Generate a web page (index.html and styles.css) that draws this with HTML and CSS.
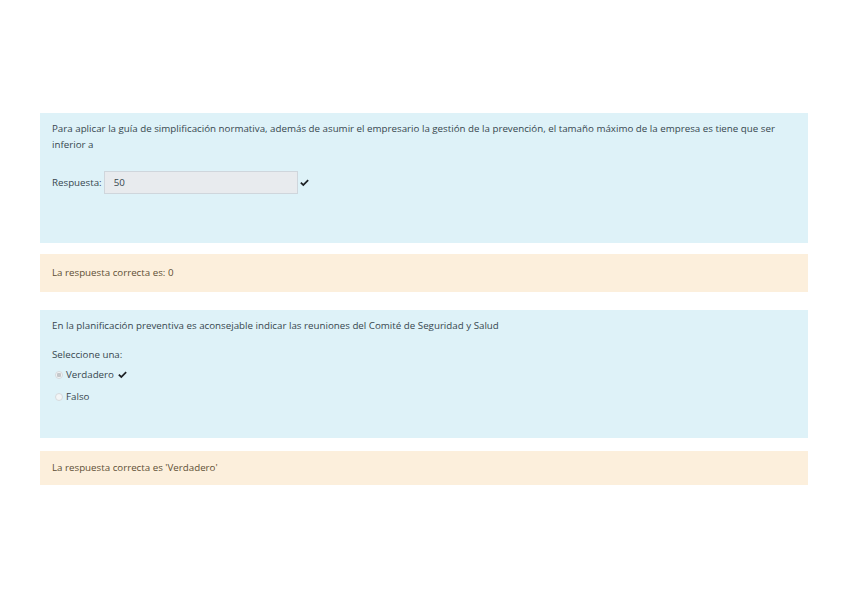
FILE: index.html
```html
<!DOCTYPE html>
<html lang="es">
<head>
    <meta charset="UTF-8">
    <meta name="viewport" content="width=device-width, initial-scale=1.0">
    <title>Revisión del intento</title>
    <link rel="stylesheet" href="styles.css">
</head>
<body>
    <div id="questions">

        <div class="que shortanswer">
            <div class="formulation">
                <div class="qtext">Para aplicar la guía de simplificación normativa, además de asumir el empresario la gestión de la prevención, el tamaño máximo de la empresa es tiene que ser inferior a</div>
                <div class="ablock">
                    <label for="q1answer">Respuesta:</label>
                    <input type="text" id="q1answer" value="50" readonly>
                    <svg class="check" viewBox="0 0 12 10" width="9" height="8"><path d="M0.3 5.2 L1.9 3.6 L4.4 6.1 L10.1 0.4 L11.7 2 L4.4 9.3 Z"/></svg>
                </div>
            </div>
            <div class="outcome">La respuesta correcta es: 0</div>
        </div>

        <div class="que truefalse">
            <div class="formulation">
                <div class="qtext">En la planificación preventiva es aconsejable indicar las reuniones del Comité de Seguridad y Salud</div>
                <div class="ablock">
                    <div class="prompt">Seleccione una:</div>
                    <div class="answer">
                        <div class="option">
                            <input type="radio" name="q2" id="q2true" checked disabled>
                            <label for="q2true">Verdadero</label>
                            <svg class="check" viewBox="0 0 12 10" width="9" height="8"><path d="M0.3 5.2 L1.9 3.6 L4.4 6.1 L10.1 0.4 L11.7 2 L4.4 9.3 Z"/></svg>
                        </div>
                        <div class="option">
                            <input type="radio" name="q2" id="q2false" disabled>
                            <label for="q2false">Falso</label>
                        </div>
                    </div>
                </div>
            </div>
            <div class="outcome small">La respuesta correcta es 'Verdadero'</div>
        </div>

    </div>
</body>
</html>
```

FILE: styles.css
```css
*{
    margin:0;
    padding:0;
    box-sizing: border-box;
}
body{
    font-family: "Open Sans", "Noto Sans", sans-serif;
    font-size: 9.75px;
    line-height: 16px;
    background-color: #fff;
    padding: 113px 40px 0 40px;
}
.que{
    display: flex;
    flex-direction: column;
    gap: 11px;
    margin-bottom: 18px;
}
.formulation{
    background-color: #def2f8;
    color: #37474f;
    padding: 8px 12px;
}
.shortanswer .formulation{
    height: 130px;
}
.truefalse .formulation{
    height: 128px;
}
.shortanswer .ablock{
    margin-top: 18px;
    display: flex;
    align-items: center;
}
input[type=text]{
    width: 194px;
    height: 23px;
    margin-left: 2px;
    padding: 0 9px;
    font: inherit;
    color: #37474f;
    background-color: #e8ebee;
    border: 1px solid #cfd6dc;
    outline: none;
}
.check{
    fill: #1d2124;
    margin-left: 2px;
}
.option .check{
    margin-left: 4px;
}
.truefalse .ablock{
    margin-top: 13px;
}
.answer{
    display: flex;
    flex-direction: column;
    gap: 6px;
    margin-top: 4px;
}
.option{
    display: flex;
    align-items: center;
    padding-left: 3px;
}
input[type=radio]{
    -webkit-appearance: none;
    appearance: none;
    width: 8px;
    height: 8px;
    border: 1px solid #d6dadd;
    border-radius: 50%;
    background-color: #f3f5f6;
    margin-right: 3px;
}
input[type=radio]:checked{
    background: radial-gradient(circle, #c4c8cb 0 2px, #f3f5f6 2.5px);
}
.outcome{
    background-color: #fcefdc;
    color: #5f5036;
    padding: 11px 12px;
}
.outcome.small{
    padding: 9px 12px;
    margin-top: 2px;
}
```
